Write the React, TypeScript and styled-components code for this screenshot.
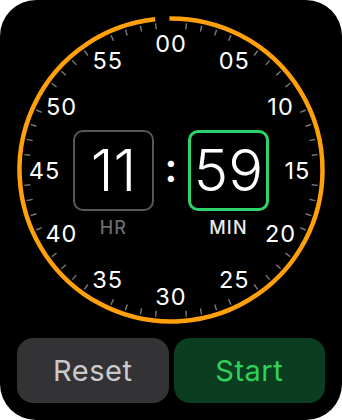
import React from 'react';
import styled, { createGlobalStyle } from 'styled-components';

const GlobalStyle = createGlobalStyle`
  html, body {
    margin: 0;
    padding: 0;
    background: #ffffff;
  }
  * {
    box-sizing: border-box;
  }
`;

const CX = 171;
const CY = 170;
const R = 151.5;

const Screen = styled.div`
  width: 342px;
  height: 420px;
  background: #000;
  border-radius: 36px;
  overflow: hidden;
  display: flex;
  flex-direction: column;
  font-family: Inter, 'Liberation Sans', sans-serif;
  color: #fff;
`;

const Dial = styled.div`
  display: grid;
  height: 338px;
  & > * {
    grid-area: 1 / 1;
  }
`;

const Face = styled.svg`
  width: 342px;
  height: 338px;
  display: block;
`;

const Center = styled.div`
  align-self: start;
  justify-self: center;
  margin-top: 130px;
  display: flex;
  align-items: flex-start;
`;

const Unit = styled.div`
  display: flex;
  flex-direction: column;
  align-items: center;
`;

const Box = styled.div<{ $active?: boolean }>`
  width: 81px;
  height: 81px;
  border-radius: 10px;
  border: ${(p) => (p.$active ? '3px solid #2fd36d' : '2px solid #575757')};
  display: flex;
  align-items: center;
  justify-content: center;
  font-size: 58px;
  font-weight: 300;
  line-height: 1;
  color: #fff;
  padding-bottom: 2px;
`;

const Label = styled.div<{ $active?: boolean }>`
  margin-top: 8px;
  font-size: 18px;
  font-weight: 500;
  letter-spacing: 1.2px;
  line-height: 1;
  color: ${(p) => (p.$active ? '#ececec' : '#6c6c6c')};
`;

const Colon = styled.div`
  width: 34px;
  height: 81px;
  display: flex;
  align-items: center;
  justify-content: center;
  font-size: 40px;
  font-weight: 600;
  line-height: 1;
  padding-bottom: 6px;
`;

const Buttons = styled.div`
  display: flex;
  gap: 5px;
  padding: 0 17px;
`;

const Button = styled.button<{ $primary?: boolean }>`
  flex: 1;
  height: 65px;
  border: none;
  border-radius: 16px;
  background: ${(p) => (p.$primary ? '#0b3d20' : '#333335')};
  color: ${(p) => (p.$primary ? '#30d158' : '#cacace')};
  font-family: Inter, 'Liberation Sans', sans-serif;
  font-size: 29px;
  font-weight: 400;
  letter-spacing: 0.5px;
  padding: 0;
`;

const pt = (deg: number, r: number) => {
  const a = (deg * Math.PI) / 180;
  return [CX + r * Math.sin(a), CY - r * Math.cos(a)];
};

function DialFace() {
  const [sx, sy] = pt(-0.6, R);
  const [ex, ey] = pt(354, R);
  const ticks = Array.from({ length: 60 }, (_, i) => i).filter((i) => i % 5 !== 0);
  const nums = Array.from({ length: 12 }, (_, i) => i * 5);

  return (
    <Face viewBox="0 0 342 338">
      <path
        d={`M ${sx} ${sy} A ${R} ${R} 0 1 1 ${ex} ${ey}`}
        fill="none"
        stroke="#ff9f0a"
        strokeWidth={4.5}
      />
      {ticks.map((i) => {
        const [x1, y1] = pt(i * 6, 147.5);
        const [x2, y2] = pt(i * 6, 141.5);
        return <line key={i} x1={x1} y1={y1} x2={x2} y2={y2} stroke="#7a7a7a" strokeWidth={1.4} />;
      })}
      {nums.map((n) => {
        const [x, y] = pt(n * 6, 126.5);
        return (
          <text
            key={n}
            x={x}
            y={y + 8.5}
            textAnchor="middle"
            fill="#fff"
            fontSize={23.5}
            letterSpacing={1}
            fontFamily="Inter, 'Liberation Sans', sans-serif"
          >
            {String(n).padStart(2, '0')}
          </text>
        );
      })}
    </Face>
  );
}

export default function App() {
  return (
    <>
      <GlobalStyle />
      <Screen>
        <Dial>
          <DialFace />
          <Center>
            <Unit>
              <Box>11</Box>
              <Label>HR</Label>
            </Unit>
            <Colon>:</Colon>
            <Unit>
              <Box $active>59</Box>
              <Label $active>MIN</Label>
            </Unit>
          </Center>
        </Dial>
        <Buttons>
          <Button>Reset</Button>
          <Button $primary>Start</Button>
        </Buttons>
      </Screen>
    </>
  );
}
